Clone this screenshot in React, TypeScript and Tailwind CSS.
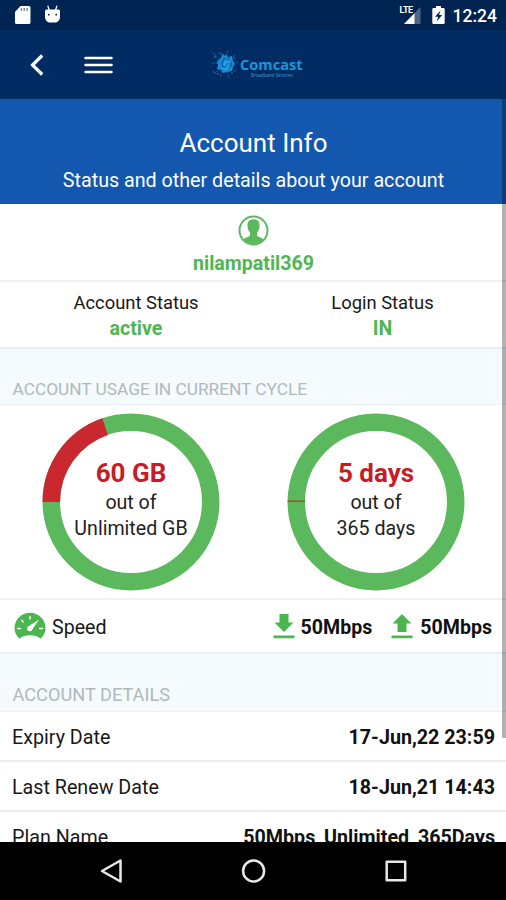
import type { ReactNode } from 'react';

type DonutProps = {
  used: number; // degrees of the ring that are used up
  value: string;
  total: string;
};

// account details list
const details = [
  { label: 'Expiry Date', value: '17-Jun,22 23:59' },
  { label: 'Last Renew Date', value: '18-Jun,21 14:43' },
  { label: 'Plan Name', value: '50Mbps_Unlimited_365Days' },
];

const StatusBar = () => (
  <div className="flex h-[30px] shrink-0 items-center bg-[#002451] pr-[9px] pl-[15px] text-white">
    <svg width="16" height="20" viewBox="0 0 16 20" fill="currentColor">
      <path d="M5.500 1H14a1.500 1.500 0 0 1 1.500 1.500v15A1.500 1.500 0 0 1 14 19H1.500A1.500 1.500 0 0 1 0 17.500V7z" />
      <path d="M6.500 3v3M9.300 3v3M12.100 3v3" stroke="#8290ad" strokeWidth="1.500" />
    </svg>
    <svg className="ml-[13px]" width="17" height="20" viewBox="0 0 16 20" fill="currentColor">
      <path d="M3.500 1.200l1.300 4M12.300 1.200l-1.300 4" stroke="currentColor" strokeWidth="1.300" strokeLinecap="round" />
      <path d="M2 4.500h12c1 0 1.500.8 1.500 1.800v5.200c0 4-2.500 6-5.500 6H6c-3 0-5.500-2-5.500-6V6.300c0-1 .5-1.800 1.500-1.800z" />
      <circle cx="4.300" cy="9.700" r=".9" fill="#002451" />
      <circle cx="11.700" cy="9.700" r=".9" fill="#002451" />
    </svg>
    <div className="relative ml-auto h-5 w-[23px]">
      <svg className="absolute inset-0" width="23" height="20" viewBox="0 0 23 20">
        <path d="M21.500 2v17H5z" fill="#4b6688" />
        <path d="M15.500 8.200V19H5z" fill="#fff" />
      </svg>
      <span className="absolute top-0 left-0 pl-px text-[9px] leading-[10px] font-bold tracking-[-0.5px]">LTE</span>
    </div>
    <svg className="ml-[10px]" width="13" height="20" viewBox="0 0 13 20">
      <path d="M4 1h5v2h2.500a1.200 1.200 0 0 1 1.200 1.200v13.600a1.200 1.200 0 0 1-1.200 1.200h-10a1.200 1.200 0 0 1-1.200-1.200V4.200A1.200 1.200 0 0 1 1.500 3H4z" fill="#fff" />
      <path d="M8.500 5.500L3 11.800h3.200L4.700 16.500 10.200 10H7z" fill="#002451" />
    </svg>
    <span className="ml-[8px] pt-[2px] text-[17.500px] leading-[28px] font-medium">12:24</span>
  </div>
);

const Logo = () => (
  <div className="flex h-[34px] w-[95px] items-center">
    <svg width="28" height="30" viewBox="0 0 28 30" fill="none" className="shrink-0">
      <g stroke="#2876b9" strokeWidth="1" strokeLinecap="round" opacity=".7">
        <path d="M14 14L2 3M14 14L8 2M14 14L17 1M14 14L24 5M14 14L27 12M14 14L25 22M14 14L18 28M14 14L9 27M14 14L3 24M14 14L1 13" strokeDasharray="9 2 2 1" />
      </g>
      <g fill="#4589c3">
        <circle cx="4" cy="7" r=".8" />
        <circle cx="2.500" cy="22" r=".7" />
        <circle cx="7" cy="24" r=".8" />
        <circle cx="21" cy="23" r=".8" />
        <circle cx="23" cy="8" r=".7" />
        <circle cx="11" cy="4" r=".8" />
      </g>
      <path d="M15 4l2 3 4-1 1 5 2 3-2 3-1 4-5 1-4 1-2-3-4-1 1-4-1-4 4-3 2-4 2 2z" fill="#168bd2" />
      <path d="M15 8c-5 2-5 9 0 10s6-3 5-6M18 7l-2 5" stroke="#0756a1" strokeWidth="1.200" />
      <path d="M13 15c0-4 4-4 6-3M12 18c3 2 5 0 6-2" stroke="#27ade8" strokeWidth="1.500" />
    </svg>
    <div className="pt-[8px] pl-[1px] text-[#1998d8]">
      <div className="origin-left scale-x-[1.08] font-['Open_Sans','Noto_Sans',sans-serif] text-[13.500px] leading-[13px] font-bold">Comcast</div>
      <div className="h-[7px] pl-[11px] font-['Open_Sans','Noto_Sans',sans-serif] text-[4.500px] leading-[7px] whitespace-nowrap text-[#4c9bce]">Broadband Services</div>
    </div>
  </div>
);

const Header = () => (
  <header className="flex h-[69px] shrink-0 items-center bg-[#002b63] text-white">
    <svg className="ml-[29px]" width="16" height="24" viewBox="0 0 16 24" fill="none">
      <path d="M13.200 2.500L3.500 12l9.700 9.500" stroke="currentColor" strokeWidth="3.200" />
    </svg>
    <svg className="ml-[39px]" width="29" height="20" viewBox="0 0 29 20" fill="none">
      <path d="M1.500 3h26M1.500 10h26M1.500 17h26" stroke="currentColor" strokeWidth="2.500" strokeLinecap="round" />
    </svg>
    <div className="ml-[98px]">
      <Logo />
    </div>
  </header>
);

const SectionTitle = ({ children }: { children: ReactNode }) => (
  <h2 className="flex flex-1 items-end pl-[12.500px] text-[#b2b8bb]">{children}</h2>
);

const Donut = ({ used, value, total }: DonutProps) => (
  <div className="relative h-[178px] w-[178px]">
    <svg width="178" height="178" viewBox="0 0 178 178" fill="none" strokeWidth="17.500">
      <circle cx="89" cy="89" r="79.700" stroke="#5cb85c" />
      {/* the used part starts at nine o'clock */}
      <circle
        cx="89"
        cy="89"
        r="79.700"
        stroke="#c9282f"
        strokeOpacity={used < 5 ? 0.7 : 1}
        pathLength={360}
        strokeDasharray={`${used} 360`}
        transform="rotate(180 89 89)"
      />
    </svg>
    <div className="absolute inset-0 flex flex-col items-center pt-[45px] text-[19.600px] leading-[26px] text-[#222]">
      <strong className="text-[26px] leading-[31px] font-bold text-[#c71c25]">{value}</strong>
      <span className="pt-px">out of</span>
      <span>{total}</span>
    </div>
  </div>
);

const UserIcon = () => (
  <svg width="31" height="31" viewBox="0 0 31 31">
    <circle cx="15.500" cy="15.500" r="14" fill="none" stroke="#5cb85c" strokeWidth="2" />
    <path
      d="M15.500 4.200c4 0 6.100 2.300 6 6 .1 3.200-.9 5.600-2.500 7.500v2.500c.3 1.500 4.800 2.100 6.800 4.300a14 14 0 0 1-20.600 0c2-2.200 6.500-2.800 6.800-4.300v-2.500c-1.600-1.900-2.600-4.300-2.500-7.500-.1-3.700 2-6 6-6z"
      fill="#5cb85c"
    />
  </svg>
);

const GaugeIcon = () => (
  <svg width="32" height="28" viewBox="0 0 32 28">
    <path d="M5.500 26.800C2.500 24 .5 20.500.5 16.300a15.500 15.500 0 0 1 31 0c0 4.200-2 7.700-5 10.500-2-2.200-5.500-3.600-10.500-3.600S7.500 24.600 5.500 26.800z" fill="#4bb64d" />
    <path d="M3.500 16.500h3M25.500 16.500h3M7.500 8.200l1.700 1.700M16 4.500v2.500" stroke="#fff" strokeWidth="1.400" strokeLinecap="round" />
    <path d="M25 7.500L18.600 17a2.800 2.800 0 1 1-3.200-3.200z" fill="#fff" />
  </svg>
);

const DownloadIcon = () => (
  <svg width="22" height="26" viewBox="0 0 22 26" fill="#4bb64d">
    <path d="M6.500 1h9v8.500h5L11 19 1.500 9.500h5zM.5 22.500h21v2.800H.5z" />
  </svg>
);

const UploadIcon = () => (
  <svg width="22" height="26" viewBox="0 0 22 26" fill="#4bb64d">
    <path d="M11 1l9.500 9.500h-5V19h-9v-8.500h-5zM.5 22.500h21v2.800H.5z" />
  </svg>
);

const NavBar = () => (
  <nav className="flex h-[58px] shrink-0 items-center bg-black pl-[98px]">
    <svg width="320" height="28" viewBox="0 0 320 28" fill="none" stroke="#e8e8e8" strokeWidth="2.500" strokeLinejoin="round">
      <path d="M22.500 3.500v21L4 14z" />
      <circle cx="155.600" cy="14" r="10.500" />
      <rect x="288.700" y="4.700" width="18.500" height="18.500" />
    </svg>
  </nav>
);

const App = () => {
  return (
    <div className="flex h-[900px] w-[506px] flex-col overflow-hidden bg-white font-[Roboto,sans-serif] text-[#181818]">
      <StatusBar />
      <Header />
      <main className="relative h-[743px] shrink-0 overflow-hidden">
        <section className="h-[105px] bg-[#1358ae] pt-[29px] text-center text-white">
          <h1 className="pl-px text-[26px] leading-[30px]">Account Info</h1>
          <p className="mt-[11px] pl-px text-[19.700px] leading-[24px]">Status and other details about your account</p>
        </section>
        <section className="flex h-[78px] flex-col items-center border-b-2 border-[#eef0f1] pt-[11px]">
          <UserIcon />
          <strong className="mt-[6px] pl-px text-[19.600px] leading-[24px] font-bold text-[#50b653]">nilampatil369</strong>
        </section>
        <section className="flex h-[67px] border-b-2 border-[#e8edef] pt-[8px] text-center text-[18.400px] leading-[26px]">
          <div className="w-[272px]">
            <p>Account Status</p>
            <strong className="block text-[19.600px] leading-[26px] font-bold text-[#50b653]">active</strong>
          </div>
          <div className="w-[221px]">
            <p>Login Status</p>
            <strong className="block text-[19.600px] leading-[26px] font-bold text-[#50b653]">IN</strong>
          </div>
        </section>
        <div className="flex h-[56px] border-b border-[#edf1f3] bg-[#f4fafd] pb-[5px] text-[17.300px] leading-[20px]">
          <SectionTitle>ACCOUNT USAGE IN CURRENT CYCLE</SectionTitle>
        </div>
        <section className="flex h-[195px] gap-[67px] border-b-2 border-[#f0f2f2] pt-[8px] pl-[42px]">
          <Donut used={71} value="60 GB" total="Unlimited GB" />
          <Donut used={1.2} value="5 days" total="365 days" />
        </section>
        <section className="flex h-[54px] items-center border-b-2 border-[#eaeeee] pr-[14px] pl-[14px] text-[19.600px]">
          <GaugeIcon />
          <span className="ml-[6px] pt-[3px]">Speed</span>
          <div className="ml-auto flex items-center font-bold text-[#111]">
            <DownloadIcon />
            <span className="ml-[6px] pt-[3px]">50Mbps</span>
            <span className="ml-[19px]">
              <UploadIcon />
            </span>
            <span className="ml-[7px] pt-[3px]">50Mbps</span>
          </div>
        </section>
        <div className="flex h-[58px] border-b border-[#edf3f5] bg-[#f4fafd] pb-[6px] text-[18.200px] leading-[20px]">
          <SectionTitle>ACCOUNT DETAILS</SectionTitle>
        </div>
        {details.map((item) => (
          <div key={item.label} className="flex h-[50px] items-center justify-between border-b-2 border-[#eceeee] pt-[3px] pr-[11px] pl-3 text-[19.700px]">
            <span>{item.label}</span>
            <strong className="font-bold text-[#111]">{item.value}</strong>
          </div>
        ))}
        {/* scroll thumb */}
        <div className="absolute top-0 right-0 h-[639px] w-[4px] bg-black/30" />
      </main>
      <NavBar />
    </div>
  );
};

export default App;
